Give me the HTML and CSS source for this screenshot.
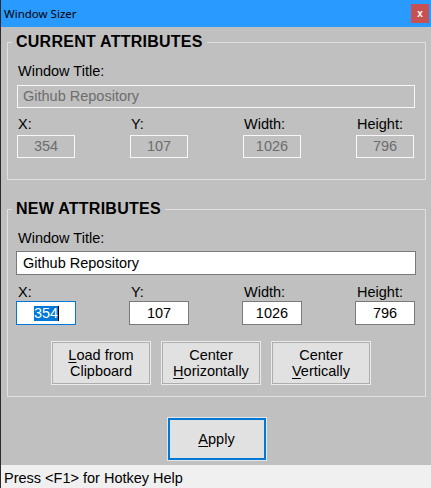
FILE: index.html
```html
<!DOCTYPE html>
<html lang="en">
<head>
<meta charset="utf-8">
<title>Window Sizer</title>
<link rel="stylesheet" href="styles.css">
</head>
<body>
<div class="window">
  <div class="titlebar">
    <span class="title">Window Sizer</span>
    <span class="close">x</span>
  </div>
  <div class="client">
    <fieldset class="group group-current">
      <legend>CURRENT ATTRIBUTES</legend>
      <div class="label">Window Title:</div>
      <div class="field wide disabled">Github Repository</div>
      <div class="coords">
        <div class="coord"><div class="label">X:</div><div class="field num disabled">354</div></div>
        <div class="coord"><div class="label">Y:</div><div class="field num disabled">107</div></div>
        <div class="coord"><div class="label">Width:</div><div class="field num disabled">1026</div></div>
        <div class="coord"><div class="label">Height:</div><div class="field num disabled">796</div></div>
      </div>
    </fieldset>
    <fieldset class="group group-new">
      <legend>NEW ATTRIBUTES</legend>
      <div class="label">Window Title:</div>
      <div class="field wide">Github Repository</div>
      <div class="coords">
        <div class="coord"><div class="label">X:</div><div class="field num focus"><span class="sel">354</span><span class="caret"></span></div></div>
        <div class="coord"><div class="label">Y:</div><div class="field num">107</div></div>
        <div class="coord"><div class="label">Width:</div><div class="field num">1026</div></div>
        <div class="coord"><div class="label">Height:</div><div class="field num">796</div></div>
      </div>
      <div class="buttons">
        <button class="btn"><u>L</u>oad from<br>Clipboard</button>
        <button class="btn">Center<br><u>H</u>orizontally</button>
        <button class="btn">Center<br><u>V</u>ertically</button>
      </div>
    </fieldset>
    <div class="apply-row">
      <button class="btn btn-default"><u>A</u>pply</button>
    </div>
  </div>
  <div class="statusbar">Press &lt;F1&gt; for Hotkey Help</div>
</div>
</body>
</html>
```

FILE: styles.css
```css
* { box-sizing: border-box; }
html, body { margin: 0; padding: 0; }
body {
  width: 431px;
  height: 488px;
  overflow: hidden;
  background: #c0c0c0;
  font-family: "Liberation Sans", Arial, sans-serif;
  font-size: 14.5px;
  color: #000;
}
.window {
  display: flex;
  flex-direction: column;
  height: 488px;
  border-left: 1px solid #2b2b2b;
  background: #c0c0c0;
}
.titlebar {
  flex: none;
  height: 27px;
  background: #299aff;
  display: flex;
  align-items: center;
  padding: 0 2px 0 3px;
}
.title {
  font-family: "Noto Sans", sans-serif;
  font-size: 11.5px;
  color: #000;
}
.close {
  margin-left: auto;
  width: 18px;
  height: 19px;
  background: #c75050;
  color: #fff;
  font: bold 10px "Liberation Sans", sans-serif;
  display: flex;
  align-items: center;
  justify-content: center;
  padding-bottom: 1px;
}
.client {
  flex: 1;
  display: flex;
  flex-direction: column;
  padding: 6px 5px 0 6px;
}
.group {
  margin: 0;
  min-width: 0;
  border: 1px solid #e0e0e0;
  padding: 12px 9px 21px 8px;
}
.group legend {
  margin-left: -4px;
  padding: 0 4px;
  font-size: 16px;
  font-weight: bold;
  line-height: 18px;
  letter-spacing: 0.25px;
}
.group-new {
  margin-top: 20px;
  padding-bottom: 11px;
}
.label {
  line-height: 16px;
  padding-left: 2px;
  white-space: nowrap;
}
.field {
  height: 24px;
  border: 1px solid #7a7a7a;
  background: #fff;
  line-height: 22px;
  white-space: nowrap;
}
.field.wide { padding-left: 6px; }
.field.num { text-align: center; }
.field.disabled {
  background: transparent;
  border-color: #f8f8f8;
  color: #6d6d6d;
  height: 23px;
  line-height: 21px;
}
.group-current .field.wide { margin: 6px 1px 0; padding-left: 5px; }
.group-current .field.num { margin: 3px 1px 0; }
.group-current .coords { margin-top: 8px; }
.group-new .field.wide { margin-top: 5px; }
.group-new .coords { margin-top: 9px; }
.group-new .field.num { margin-top: 1px; }
.coords {
  display: grid;
  grid-template-columns: repeat(4, 60px);
  column-gap: 53px;
}
.field.focus { border-color: #0078d7; }
.sel {
  background: #0078d7;
  color: #fff;
  display: inline-block;
  line-height: 15px;
  vertical-align: middle;
  margin-top: -2px;
}
.caret {
  display: inline-block;
  width: 1px;
  height: 15px;
  background: #000;
  vertical-align: middle;
  margin-top: -2px;
  margin-right: -1px;
}
.buttons {
  display: flex;
  gap: 10px;
  margin: 16px 0 0 35px;
}
.btn {
  width: 100px;
  height: 44px;
  margin: 0;
  padding: 0;
  font: inherit;
  line-height: 16px;
  color: #000;
  background: #e1e1e1;
  border: 1px solid #ebebeb;
  box-shadow: inset 0 0 0 1px #adadad;
  text-align: center;
}
.btn u { text-underline-offset: 2px; }
.apply-row {
  display: flex;
  justify-content: center;
  margin-top: 20px;
}
.btn-default {
  border: 1px solid #e6e6e6;
  box-shadow: inset 0 0 0 2px #0078d7;
}
.statusbar {
  flex: none;
  height: 23px;
  background: #f0f0f0;
  padding: 5px 0 0 3px;
  line-height: 16px;
  white-space: nowrap;
}
```
